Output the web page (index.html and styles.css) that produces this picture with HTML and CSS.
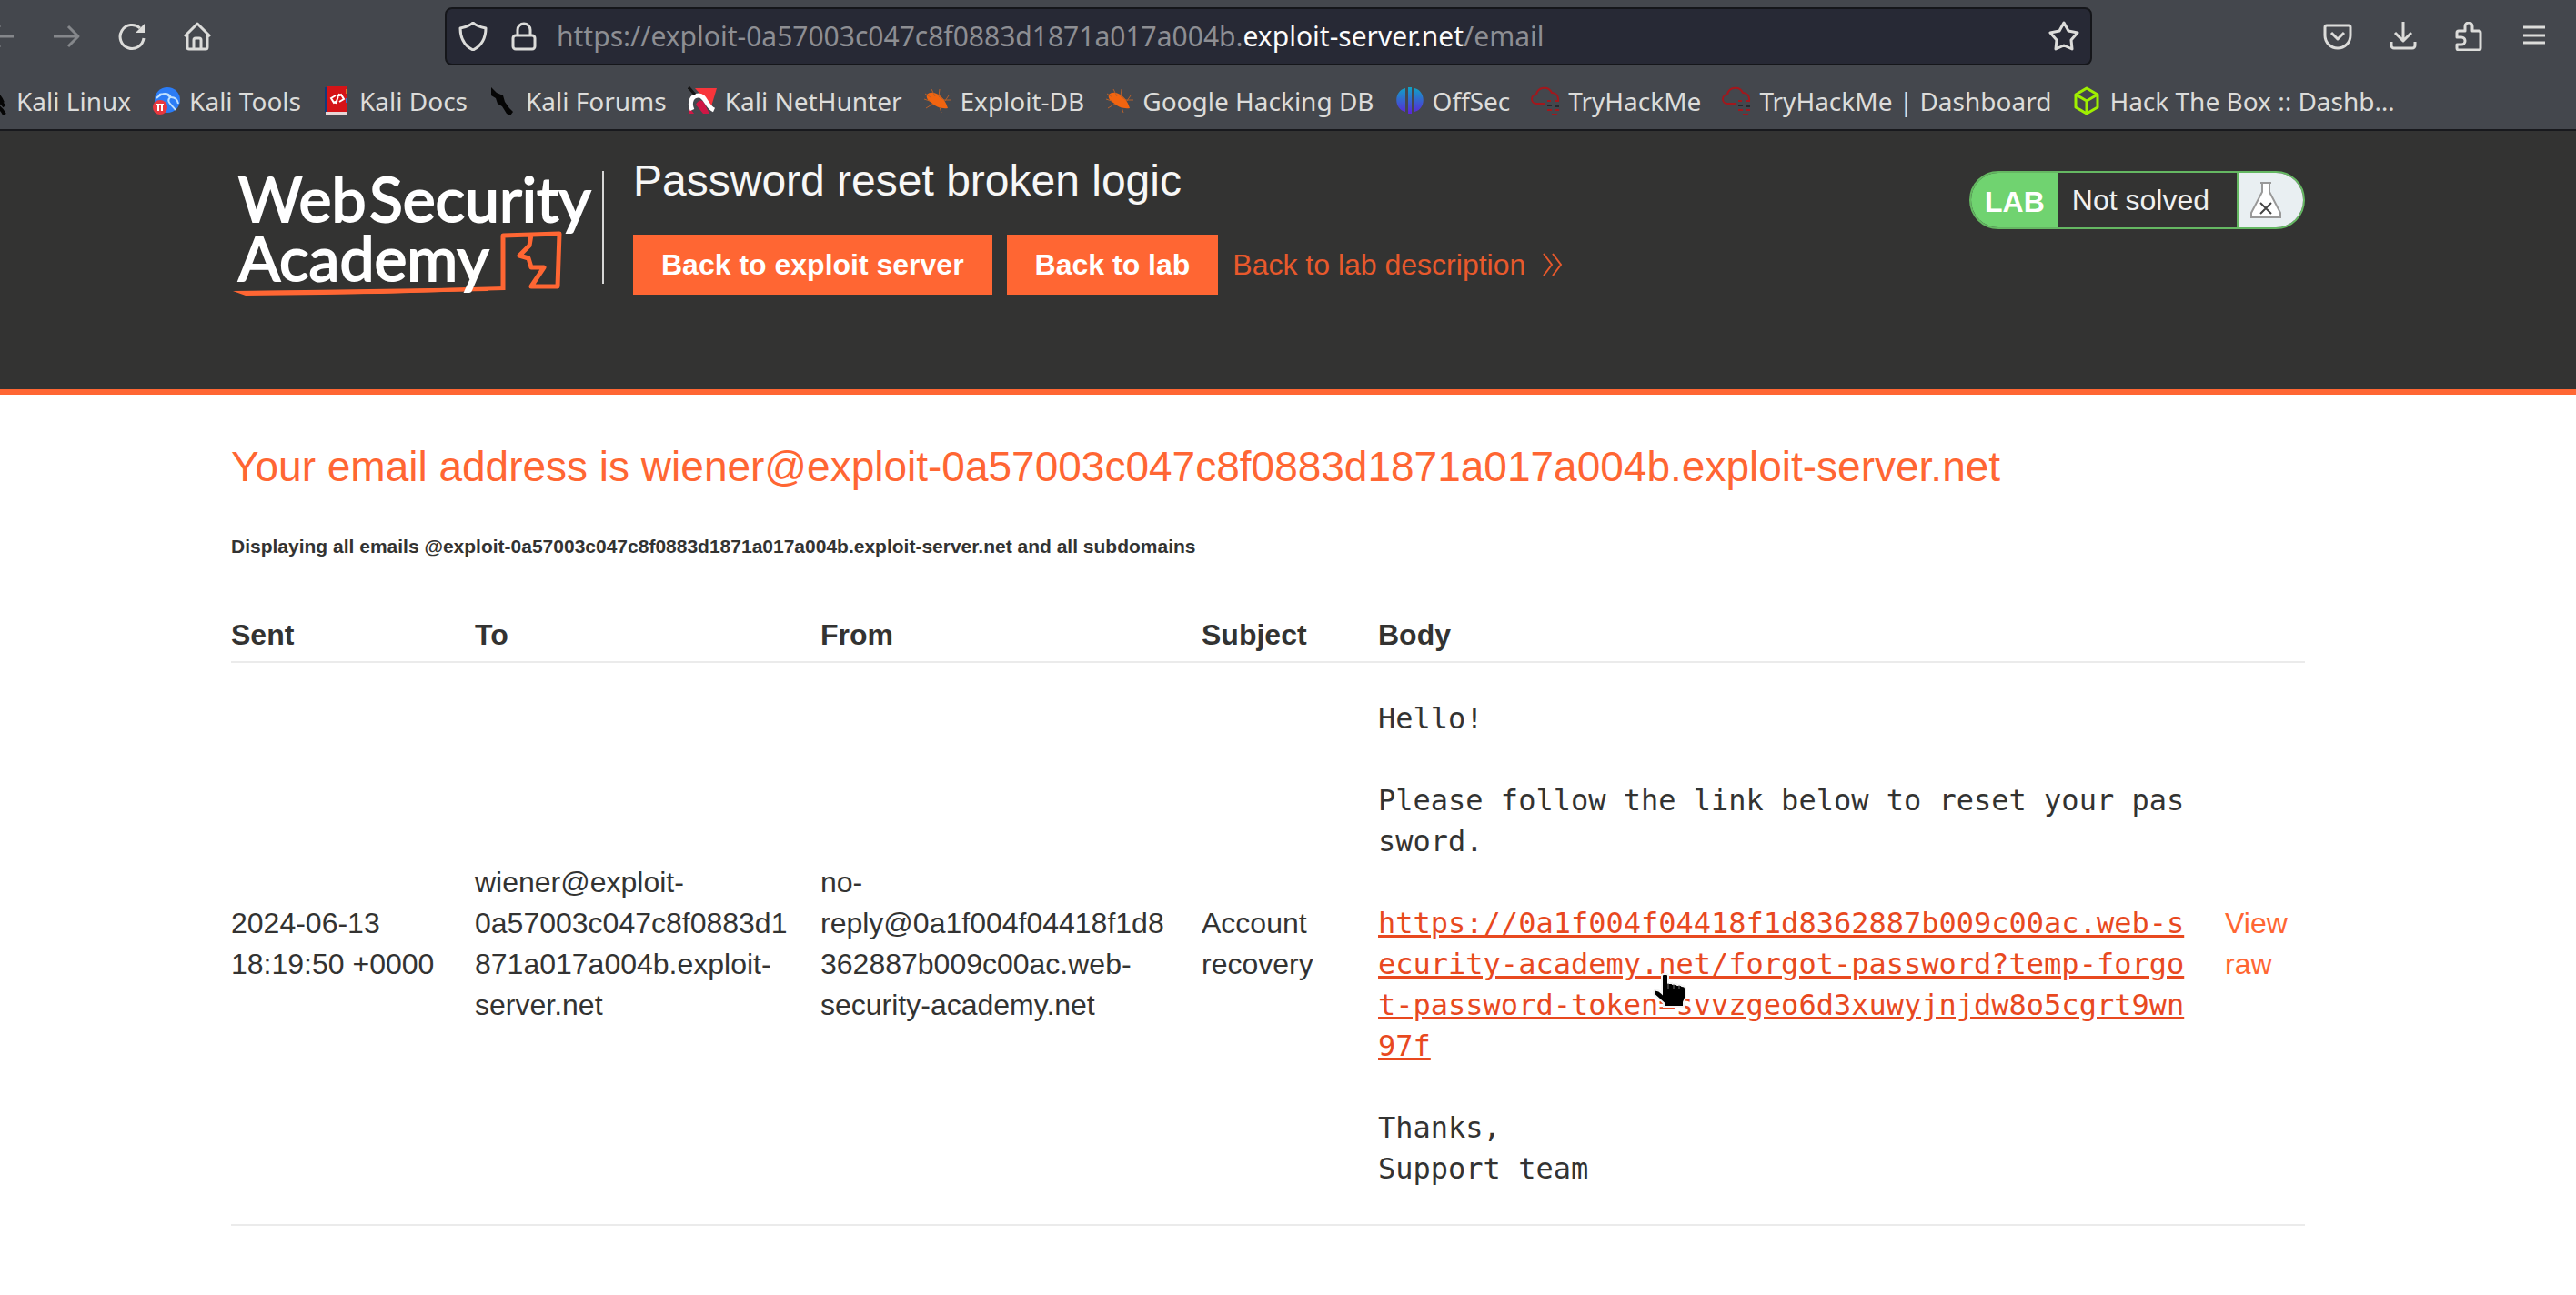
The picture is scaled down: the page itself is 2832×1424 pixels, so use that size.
FILE: index.html
```html
<!DOCTYPE html>
<html lang="en">
<head>
<meta charset="utf-8">
<title>Password reset broken logic</title>
<link rel="stylesheet" href="styles.css">
</head>
<body>
<div class="browser">
  <div class="toolbar">
    <nav class="nav" aria-label="Navigation">
      <button class="tool dim" type="button" aria-label="Back"><svg width="32" height="32" viewBox="0 0 32 32"><path d="M30 16H2M15 4L3 16l12 12"/></svg></button>
      <button class="tool dim" type="button" aria-label="Forward"><svg width="32" height="32" viewBox="0 0 32 32"><path d="M2 16h27M18 5l11 11-11 11"/></svg></button>
      <button class="tool" type="button" aria-label="Reload"><svg width="32" height="32" viewBox="0 0 32 32"><path d="M29 18a13 13 0 1 1-4-11"/><path class="solid" d="M30 2v10H20z"/></svg></button>
      <button class="tool" type="button" aria-label="Home"><svg width="32" height="32" viewBox="0 0 32 32"><path d="M2 16L16 2l14 14M5 14v14a2 2 0 0 0 2 2h18a2 2 0 0 0 2-2V14M12 30V20a2 2 0 0 1 2-2h4a2 2 0 0 1 2 2v10"/></svg></button>
    </nav>
    <div class="urlbar">
      <svg class="line-icon" width="32" height="32" viewBox="0 0 32 32"><path d="M16 1c4 4 9 5 14 6 0 11-4 19-14 24C6 26 2 18 2 7c5-1 10-2 14-6z"/></svg>
      <svg class="line-icon" width="32" height="32" viewBox="0 0 32 32"><rect x="4" y="15" width="24" height="15" rx="3"/><path d="M9 15V9a7 7 0 0 1 14 0v6"/></svg>
      <p class="url">https://exploit-0a57003c047c8f0883d1871a017a004b.<strong>exploit-server.net</strong>/email</p>
      <button class="tool" type="button" aria-label="Bookmark this page"><svg width="34" height="34" viewBox="0 0 34 34"><path d="M17 2l5 9 10 2-7 8 1 10-9-4-9 4 1-10-7-8 10-2z"/></svg></button>
    </div>
    <div class="tools">
      <button class="tool" type="button" aria-label="Pocket"><svg width="32" height="32" viewBox="0 0 32 32"><path d="M4 4h24a2 2 0 0 1 2 2v9a14 14 0 0 1-28 0V6a2 2 0 0 1 2-2zM9 12l7 7 7-7"/></svg></button>
      <button class="tool" type="button" aria-label="Downloads"><svg width="32" height="32" viewBox="0 0 32 32"><path d="M16 0v20M7 12l9 9 9-9M3 22v4a3 3 0 0 0 3 3h20a3 3 0 0 0 3-3v-4"/></svg></button>
      <button class="tool" type="button" aria-label="Extensions"><svg width="32" height="32" viewBox="0 0 32 32"><path d="M3 17v-5a2 2 0 0 1 2-2h7V5a4 4 0 0 1 8 0v5h7a2 2 0 0 1 2 2v17a2 2 0 0 1-2 2H5a2 2 0 0 1-2-2v-4h5a4 4 0 0 0 0-8z"/></svg></button>
      <button class="tool" type="button" aria-label="Menu"><svg width="32" height="32" viewBox="0 0 32 32"><path d="M4 6h24M4 15h24M4 23h24"/></svg></button>
    </div>
  </div>
  <nav class="bookmarks" aria-label="Bookmarks">
    <a href="#"><svg width="32" height="32" viewBox="0 0 32 32"><path fill="none" stroke="#050505" stroke-width="4" d="M10 3c8 2 13 8 16 15M12 13c8 1 13 5 16 9M14 20c7 1 11 5 14 11"/></svg>Kali Linux</a>
    <a href="#"><svg width="32" height="32" viewBox="0 0 32 32"><circle cx="17" cy="15" r="14" fill="#2b7cf6"/><path d="M5 13c7-7 13-6 16-1 4 0 7 2 8 7M8 9c6-2 9-1 12 3-5 5 2 8 6 14" fill="none" stroke="#bfe0ff" stroke-width="2"/><circle cx="9" cy="23" r="8" fill="#e8383e"/><path d="M5 20h8M7 20v7M11 20v7" stroke="#fff" stroke-width="2"/></svg>Kali Tools</a>
    <a href="#"><svg width="32" height="32" viewBox="0 0 32 32"><path fill="#123a7c" d="M3 1h5v27H3z"/><path fill="#d51317" d="M6 0h21v28H6z"/><path fill="#e6d6d6" d="M4 28h23v3H4z"/><path fill="#e0762a" d="M26 3h2v5h-2z"/><path fill="#3f6fc8" d="M26 13h2v5h-2z"/><path d="M15 10l-5 3 3 5 4-2M17 11l4-2 3 5-5 3M19 8l-4 11" fill="none" stroke="#fff" stroke-width="2"/></svg>Kali Docs</a>
    <a href="#"><svg width="32" height="32" viewBox="0 0 32 32"><path fill="#050505" d="M3 1l6 6 7 3 2 7 5 7 4 4-3 4-4-2-5-8-5-3-2-6-5-3z"/></svg>Kali Forums</a>
    <a href="#"><svg width="32" height="32" viewBox="0 0 32 32"><path fill="#f8353b" d="M8 2h24l-6 20z"/><path fill="#cf1745" d="M1 22l6 8H1zM9 20c3-6 8-6 10 0l5 10h-7z"/><path fill="none" stroke="#fff" stroke-width="5" d="M5 26C1 17 5 10 12 10c8 0 8 12 17 16"/><path d="M1 1l7 8" stroke="#151515" stroke-width="3"/></svg>Kali NetHunter</a>
    <a href="#"><svg width="32" height="32" viewBox="0 0 32 32"><path fill="#f2640f" d="M4 9c4-4 10-2 14 1 5 4 7 8 9 14-6 1-13-1-18-6-4-3-6-5-5-9z"/><path d="M2 8l6 4M9 3l4 8M18 3l-1 8 6 4h8M3 24l8-5M20 29l-2-6M1 14l6 2M24 16l4-6" fill="none" stroke="#b5602c" stroke-width="1"/></svg>Exploit-DB</a>
    <a href="#"><svg width="32" height="32" viewBox="0 0 32 32"><path fill="#f2640f" d="M4 9c4-4 10-2 14 1 5 4 7 8 9 14-6 1-13-1-18-6-4-3-6-5-5-9z"/><path d="M2 8l6 4M9 3l4 8M18 3l-1 8 6 4h8M3 24l8-5M20 29l-2-6M1 14l6 2M24 16l4-6" fill="none" stroke="#b5602c" stroke-width="1"/></svg>Google Hacking DB</a>
    <a href="#"><svg width="32" height="32" viewBox="0 0 32 32"><defs><linearGradient id="os" x2="0" y2="1"><stop offset="0" stop-color="#0fa3c4"/><stop offset="1" stop-color="#5b25d8"/></linearGradient></defs><path fill="url(#os)" d="M11 2v26C-2 25-2 5 11 2zM21 2v26c13-3 13-23 0-26zM14 1h4v29h-4z"/></svg>OffSec</a>
    <a href="#"><svg width="32" height="32" viewBox="0 0 32 32"><path d="M15 19H6a5 5 0 0 1 0-10 9 9 0 0 1 17-2 7 7 0 0 1 7 8" fill="none" stroke="#a3171c" stroke-width="2"/><path d="M18 16h4M26 16h5M18 26h5M27 26h4M23 31h6" stroke="#a3171c" stroke-width="2"/><path d="M18 21h5M26 22h5" stroke="#25272d" stroke-width="2"/></svg>TryHackMe</a>
    <a href="#"><svg width="32" height="32" viewBox="0 0 32 32"><path d="M15 19H6a5 5 0 0 1 0-10 9 9 0 0 1 17-2 7 7 0 0 1 7 8" fill="none" stroke="#a3171c" stroke-width="2"/><path d="M18 16h4M26 16h5M18 26h5M27 26h4M23 31h6" stroke="#a3171c" stroke-width="2"/><path d="M18 21h5M26 22h5" stroke="#25272d" stroke-width="2"/></svg>TryHackMe | Dashboard</a>
    <a href="#"><svg width="32" height="32" viewBox="0 0 32 32"><path d="M16 2l12 7v14l-12 7-12-7V9zM4 9l12 7 12-7M16 16v14" fill="none" stroke="#9fef00" stroke-width="3" stroke-linejoin="round"/></svg>Hack The Box :: Dashb…</a>
  </nav>
</div>

<header class="lab-header">
  <a class="logo" href="#" aria-label="Web Security Academy">
    <svg width="416" height="160" viewBox="0 -10 416 160">
      <g fill="none" stroke="#ff6633">
        <path stroke-width="5" stroke-linejoin="round" d="M299 139V79l62-2-2 58h-29l14-21h-14l-3-10-10-3 11-11 2-12"/>
        <path stroke-width="4" d="M24 142l140-1 137-4"/>
      </g>
      <path fill="#ff6633" d="M2 140l80-1 200-3v4l-180 4-86 1z"/>
      <g class="logo-text">
        <text x="8" y="64">Web</text>
        <text x="152" y="64">Security</text>
        <text x="8" y="129">Academy</text>
      </g>
      <path stroke="#d6d6d5" stroke-width="2" d="M409 8v124"/>
    </svg>
  </a>
  <div class="title-block">
    <h1>Password reset broken logic</h1>
    <div class="actions">
      <a class="button" href="#">Back to exploit server</a>
      <a class="button" href="#">Back to lab</a>
      <a class="back" href="#">Back to lab description<svg width="24" height="26" viewBox="0 0 24 26"><path d="M2 1l9 12-9 12M12 1l9 12-9 12"/></svg></a>
    </div>
  </div>
  <div class="status">
    <span class="status-tag">LAB</span>
    <span class="status-text">Not solved</span>
    <span class="status-icon"><svg width="36" height="42" viewBox="0 0 36 42"><path fill="#fff" stroke="#999" stroke-width="2" d="M12 2h12M14 2v10L2 35v5h32v-5L22 12V2"/><path d="M12 24l12 12M24 24L12 36" stroke="#444" stroke-width="2"/></svg></span>
  </div>
</header>

<main class="content">
  <h2>Your email address is wiener@exploit-0a57003c047c8f0883d1871a017a004b.exploit-server.net</h2>
  <h3>Displaying all emails @exploit-0a57003c047c8f0883d1871a017a004b.exploit-server.net and all subdomains</h3>
  <table class="emails">
    <thead>
      <tr><th class="sent">Sent</th><th class="to">To</th><th class="from">From</th><th class="subject">Subject</th><th>Body</th><th class="view"></th></tr>
    </thead>
    <tbody>
      <tr>
        <td>2024-06-13 18:19:50 +0000</td>
        <td>wiener@exploit-0a57003c047c8f0883d1871a017a004b.exploit-server.net</td>
        <td>no-reply@0a1f004f04418f1d8362887b009c00ac.web-security-academy.net</td>
        <td>Account recovery</td>
        <td class="body">
<pre>Hello!

Please follow the link below to reset your password.

<a href="#">https://0a1f004f04418f1d8362887b009c00ac.web-security-academy.net/forgot-password?temp-forgot-password-token=svvzgeo6d3xuwyjnjdw8o5cgrt9wn97f</a>

Thanks,
Support team</pre>
          <svg class="pointer" width="40" height="40" viewBox="0 0 40 40"><path fill="#000" stroke="#f4f4f4" stroke-width="2" d="M11 4q0-2 2-2h3q2 0 2 2v8h4l1 1h4l1 1h4l1 1q4 0 4 3v10l-2 5v5H13v-4L3 25q-2-3 0-5 4-1 8 3z"/><path d="M18 12v6M24 13v5M30 14v5" stroke="#777" stroke-width="1"/></svg>
        </td>
        <td class="view"><a href="#">View raw</a></td>
      </tr>
    </tbody>
  </table>
</main>
</body>
</html>
```

FILE: styles.css
```css
* { box-sizing: border-box; }
body {
  margin: 0;
  background: #fff;
  color: #333332;
  font: 32px/45px "Liberation Sans", Arial, sans-serif;
}
a { color: #ff6633; text-decoration: none; }
svg { display: block; flex: none; }
h1, h2, h3, p, pre { margin: 0; }

.browser {
  background: #44474d;
  border-bottom: 2px solid #18191d;
  color: #dcdcda;
  font: 28px/40px "Noto Sans", sans-serif;
  overflow: hidden;
}
.toolbar { display: flex; align-items: center; height: 80px; }
.nav { display: flex; gap: 40px; width: 504px; margin-left: -15px; }
.tool {
  display: flex;
  padding: 0;
  border: 0;
  background: none;
  color: #dcdcda;
}
.tool.dim { color: #85878b; }
.tool path, .line-icon { fill: none; stroke: currentColor; stroke-width: 3; stroke-linejoin: round; }
.tool path.solid { fill: currentColor; stroke-width: 0; }
.urlbar {
  display: flex;
  align-items: center;
  flex: 1;
  height: 64px;
  padding: 0 12px 0 13px;
  gap: 24px;
  background: #272935;
  border: 2px solid #15161a;
  border-radius: 8px;
}
.url { flex: 1; color: #8d8e93; font-size: 30px; white-space: nowrap; margin-left: -4px; }
.url strong { font-weight: 400; color: #fbfbfb; }
.tools { display: flex; gap: 40px; padding: 0 30px 0 254px; }
.bookmarks { display: flex; align-items: center; gap: 23px; height: 62px; margin-left: -23px; white-space: nowrap; }
.bookmarks a { display: flex; align-items: center; gap: 9px; color: inherit; }

.lab-header {
  display: flex;
  align-items: flex-start;
  min-height: 290px;
  padding: 26px 298px 0 254px;
  background: #333332;
  border-bottom: 6px solid #ff6633;
}
.title-block { margin-left: 26px; }
h1 { font-size: 48px; font-weight: 400; line-height: 50px; color: #f7f7f6; margin-top: 4px; }
.actions { display: flex; align-items: center; gap: 16px; margin-top: 34px; }
.button { background: #ff6633; color: #fff; font-weight: 700; line-height: 66px; padding: 0 31px; }
.back { display: flex; align-items: center; gap: 18px; color: #e8592c; }
.back path { fill: none; stroke: currentColor; stroke-width: 2; }
.logo-text { fill: #fff; stroke: #fff; stroke-width: 2; font-family: Lato, sans-serif; font-size: 68px; }
.status {
  display: flex;
  margin: 18px 0 0 auto;
  height: 64px;
  line-height: 60px;
  border: 2px solid #65b862;
  border-radius: 32px;
  overflow: hidden;
}
.status-tag { background: #70d370; color: #fff; font-weight: 700; padding: 2px 14px 0 15px; }
.status-text { padding: 0 30px 0 16px; color: #f0f0ef; border-right: 2px solid #65b862; }
.status-icon { display: flex; align-items: center; padding: 0 23px 0 12px; background: #e9eff2; }

.content { padding: 54px 298px 70px 254px; }
h2 { font-size: 46px; font-weight: 400; line-height: 50px; color: #ff6633; }
h3 { font-size: 21px; line-height: 30px; margin-top: 48px; }
.emails { width: 100%; margin-top: 60px; border-collapse: collapse; table-layout: fixed; text-align: left; }
.emails th { padding: 0 34px 6px 0; border-bottom: 2px solid #ebebeb; }
.emails td { padding: 39px 34px 38px 0; border-bottom: 2px solid #ebebeb; vertical-align: middle; overflow-wrap: anywhere; }
.emails .view { width: 88px; padding-right: 0; }
.sent { width: 268px; }
.to { width: 380px; }
.from { width: 419px; }
.subject { width: 194px; }
.body { position: relative; }
pre { font: 32px/45px "DejaVu Sans Mono", monospace; white-space: pre-wrap; word-break: break-all; }
pre a { color: #e8491f; text-decoration: underline; }
.pointer { position: absolute; left: 301px; top: 340px; }
```
